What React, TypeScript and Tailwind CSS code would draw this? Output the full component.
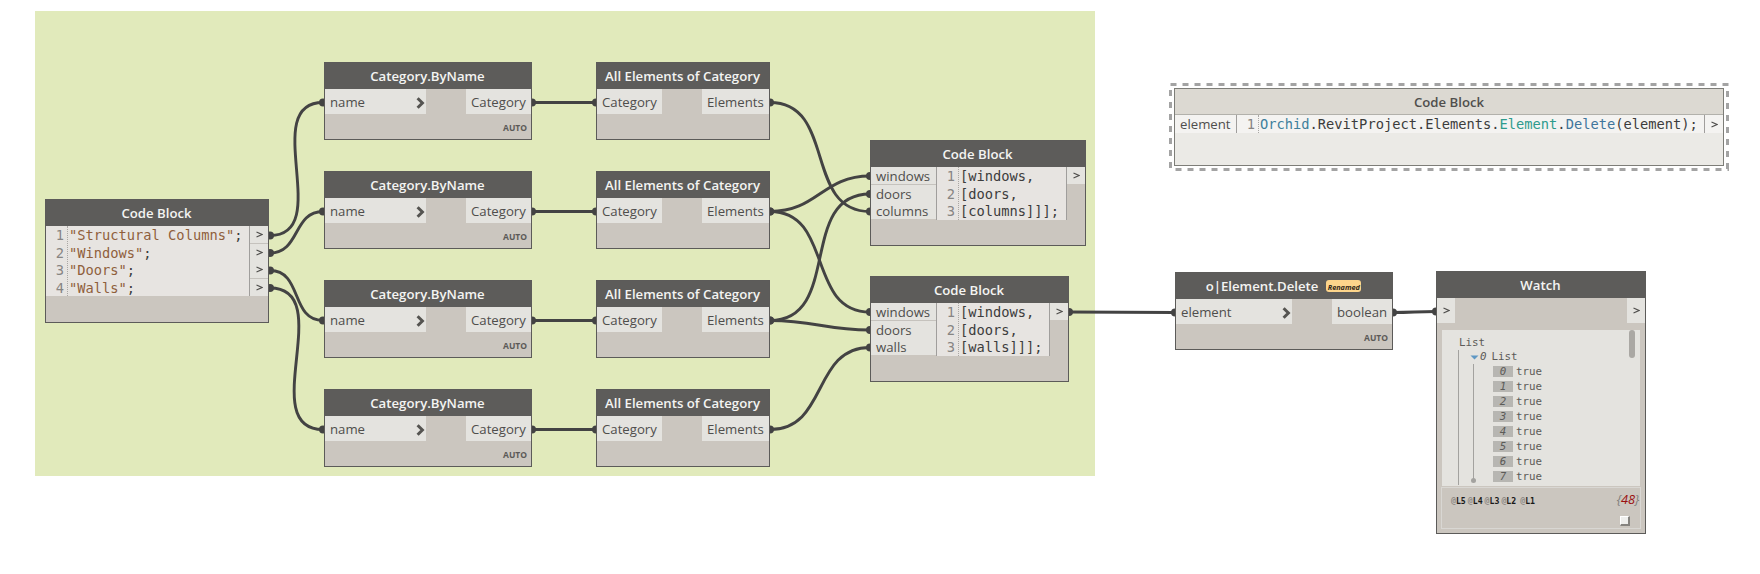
import React from "react";

type Point = [number, number];

const wires: [Point, Point][] = [
  [[270, 235.5], [323, 102.5]],
  [[270, 253], [323, 211.5]],
  [[270, 270.5], [323, 320.5]],
  [[270, 288], [323, 429.5]],
  [[532, 102.5], [596, 102.5]],
  [[532, 211.5], [596, 211.5]],
  [[532, 320.5], [596, 320.5]],
  [[532, 429.5], [596, 429.5]],
  [[770, 102.5], [870, 211.5]],
  [[770, 211.5], [870, 176]],
  [[770, 211.5], [870, 312]],
  [[770, 320.5], [870, 194]],
  [[770, 320.5], [870, 330]],
  [[770, 429.5], [870, 347.5]],
  [[1069, 312], [1175, 312.5]],
  [[1393, 312.5], [1436, 311.5]],
];

function wirePath([[x0, y0], [x1, y1]]: [Point, Point]) {
  const offset = 0.45 * Math.hypot(x1 - x0, y1 - y0);
  return `M${x0} ${y0}C${x0 + offset} ${y0} ${x1 - offset} ${y1} ${x1} ${y1}`;
}

function Wires() {
  return (
    <svg className="absolute inset-0" width="1760" height="574" fill="none">
      {wires.map((w, i) => (
        <g key={i}>
          <path d={wirePath(w)} stroke="#434343" strokeWidth="2.9" />
          <circle cx={w[0][0]} cy={w[0][1]} r="4" fill="#434343" />
          <circle cx={w[1][0]} cy={w[1][1]} r="4" fill="#434343" />
        </g>
      ))}
    </svg>
  );
}

function Node({ title, className, children, badge }: { title: string; className: string; children: React.ReactNode; badge?: React.ReactNode }) {
  return (
    <section className={`absolute flex flex-col border border-[#5c5b59] bg-[#cbc6bf] ${className}`}>
      <header className="flex h-[26px] shrink-0 items-center justify-center bg-[#5d5c5a] pt-px pr-px text-[13.2px] font-semibold whitespace-pre text-[#f4f4f2]">
        <span>{title}</span>
        {badge}
      </header>
      {children}
    </section>
  );
}

function Chevron() {
  return (
    <svg width="9" height="12" viewBox="0 0 9 12" fill="none">
      <path d="M1.6 1.2L6.4 6L1.6 10.8" stroke="#555451" strokeWidth="3" />
    </svg>
  );
}

function Port({ label, className, chevron }: { label: string; className: string; chevron?: boolean }) {
  return (
    <div className={`flex h-[25px] items-center justify-between bg-[#e4e3df] pt-[2px] pr-[5px] pl-[5px] ${className}`}>
      <span>{label}</span>
      {chevron && <span className="mr-[-4px]"><Chevron /></span>}
    </div>
  );
}

function FunctionNode(props: { title: string; className: string; input: string; inputClass: string; output: string; outputClass: string; chevron?: boolean; auto?: boolean; badge?: React.ReactNode }) {
  return (
    <Node title={props.title} className={`h-[78px] ${props.className}`} badge={props.badge}>
      <div className="flex justify-between text-[13.2px] text-[#4f4e4c]">
        <Port label={props.input} className={props.inputClass} chevron={props.chevron} />
        <Port label={props.output} className={props.outputClass} />
      </div>
      {props.auto && (
        <div className="flex h-[25px] items-center justify-end pt-[3px] pr-1 text-[8.5px] font-bold text-[#5c5a57]">AUTO</div>
      )}
    </Node>
  );
}

function Caret() {
  return (
    <svg width="7" height="7" viewBox="0 0 7 7" fill="none">
      <path d="M.5 1L6 3.5L.5 6" stroke="#4f4e4c" strokeWidth="1.1" />
    </svg>
  );
}

function LineNumbers({ count }: { count: number }) {
  return (
    <div className="w-[22px] border-r border-dotted border-[#aaa7a4] pr-[3px] text-right text-[#878583]">
      {Array.from({ length: count }, (_, i) => (
        <div key={i} className="h-[17.5px]">{i + 1}</div>
      ))}
    </div>
  );
}

const mono = "font-['DejaVu_Sans_Mono',monospace] text-[13.72px] leading-[18px] whitespace-pre";

function ListBlock({ className, names }: { className: string; names: string[] }) {
  return (
    <Node title="Code Block" className={`h-[106px] ${className}`}>
      <div className="flex h-[53px]">
        <div className="flex h-[52px] w-[65px] flex-col bg-[#e4e3df] text-[13.2px] leading-[18px] text-[#4f4e4c]">
          {names.map((n, i) => (
            <div key={n} className={i === 0 ? "h-[18px] border-b border-[#c5c2bd] pl-[5px]" : "h-[17px] pl-[5px]"}>{n}</div>
          ))}
        </div>
        <div className={`flex flex-1 border-x border-[#a09e9c] bg-[#e7e4e1] ${mono}`}>
          <LineNumbers count={3} />
          <div className="pl-px text-[#3c3c3c]">
            {names.map((n, i) => (
              <div key={n} className="h-[17.5px]">{`[${n}${i === 2 ? "]]];" : ","}`}</div>
            ))}
          </div>
        </div>
        <div className="flex h-[17px] w-[18px] items-center justify-center bg-[#e4e3df]"><Caret /></div>
      </div>
    </Node>
  );
}

function StringBlock() {
  const values = ["Structural Columns", "Windows", "Doors", "Walls"];
  return (
    <Node title="Code Block" className="top-[199px] left-[45px] h-[124px] w-[224px]">
      <div className="flex h-[70px] bg-[#e7e4e1]">
        <div className={`flex flex-1 border-r border-[#a09e9c] ${mono}`}>
          <LineNumbers count={4} />
          <div className="pl-px text-[#3c3c3c]">
            {values.map((v) => (
              <div key={v} className="h-[17.5px]">
                <span className="text-[#8f5f3c]">{`"${v}"`}</span>;
              </div>
            ))}
          </div>
        </div>
        <div className="flex w-[18px] flex-col bg-[#e4e3df]">
          {values.map((v, i) => (
            <div key={v} className={`flex h-[17.5px] items-center justify-center ${i % 2 === 0 ? "border-b border-[#c5c2bd]" : ""}`}><Caret /></div>
          ))}
        </div>
      </div>
    </Node>
  );
}

function FrozenBlock() {
  return (
    <>
      <svg className="absolute top-[80px] left-[1166px]" width="568" height="94" stroke="#a3a3a3" strokeWidth="3" strokeDasharray="6 6">
        <path d="M4.5 4.5H563" />
        <path d="M4.5 10V91" />
        <path d="M9.5 89.5H563" />
        <path d="M561.5 11V91" />
      </svg>
      <section className="absolute top-[88px] left-[1174px] flex h-[78px] w-[550px] flex-col border border-[#7d7d78] bg-[#ebeae6]">
        <header className="flex h-[26px] shrink-0 items-center justify-center border-b border-[#b2b1ab] bg-[#dcd9d2] pt-[2px] text-[13.2px] font-semibold text-[#504f4d]">Code Block</header>
        <div className="flex h-[18px] bg-[#f4f3f1]">
          <div className="w-[61px] pl-[5px] text-[13.2px] leading-[18px] text-[#4f4e4c]">element</div>
          <div className={`flex flex-1 border-x border-[#a09e9c] ${mono}`}>
            <LineNumbers count={1} />
            <div className="pl-px text-[#3c3c3c]">
              <span className="text-[#3f7f9c]">Orchid</span>.RevitProject.Elements.<span className="text-[#2e9b8d]">Element</span>.<span className="text-[#40759b]">Delete</span>(element);
            </div>
          </div>
          <div className="flex w-[18px] items-center justify-center"><Caret /></div>
        </div>
      </section>
    </>
  );
}

function WatchNode() {
  return (
    <Node title="Watch" className="top-[271px] left-[1436px] h-[263px] w-[210px]">
      <div className="flex h-[25px] justify-between">
        <div className="flex w-[18px] items-center justify-center bg-[#e4e3df]"><Caret /></div>
        <div className="flex w-[18px] items-center justify-center bg-[#e4e3df]"><Caret /></div>
      </div>
      <div className="mx-[5px] mt-[7px] flex h-[156px] justify-between bg-[#e4e3df] font-['DejaVu_Sans_Mono',monospace] text-[10.8px] text-[#5c5b58]">
        <div className="pt-[6px] pl-[16px]">
          <div className="h-[14px] leading-[14px]">
            <span className="pl-px">List</span>
          </div>
          <div className="h-[135px] border-l border-[#a3a29f] pl-[11px]">
            <div className="flex h-[14px] items-center leading-[14px]">
              <svg width="9" height="5" viewBox="0 0 9 5"><path d="M.5 .5H8.5L4.5 4.5Z" fill="#5f98c4" /></svg>
              <span className="pl-px italic">0</span>
              <span className="pl-[5px]">List</span>
            </div>
            <div className="relative ml-[3px] h-[118px] border-l border-[#a3a29f] pl-[19px]">
              {Array.from({ length: 8 }, (_, i) => (
                <div key={i} className="flex h-[15px] items-center">
                  <span className="h-[11px] w-[20px] bg-[#b7b6b2] text-center leading-[12px] italic">{i}</span>
                  <span className="pl-[3px] leading-[13px]">true</span>
                </div>
              ))}
              <span className="absolute -bottom-[1px] -left-[3px] size-[5px] rounded-full bg-[#a3a29f]" />
            </div>
          </div>
        </div>
        <div className="mr-[5px] h-[28px] w-[6px] rounded-full bg-[#aaa8a4]" />
      </div>
      <div className="mx-1 mt-px h-[42px] border border-[#d9d7d3]">
        <div className="flex h-[26px] items-center justify-between pr-px pl-[9px]">
          <div className="flex gap-[2px] font-['DejaVu_Sans_Mono',monospace] text-[8.2px] font-bold text-[#191919]">
            {["L5", "L4", "L3", "L2", "L1"].map((l) => (
              <span key={l} className={l === "L1" ? "ml-[2px]" : ""}><span className="text-[#8e8a86]">@</span>{l}</span>
            ))}
          </div>
          <div className="-mt-[2px] text-[12.8px] tracking-[-0.2px] text-[#82807c] italic">{"{"}<span className="text-[#9b1010]">48</span>{"}"}</div>
        </div>
        <div className="flex justify-end pt-[2px] pr-[10px]">
          <div className="size-[10px] border-t border-r-2 border-b-2 border-l border-t-white border-r-[#85837f] border-b-[#85837f] border-l-white bg-[#eeeeec]" />
        </div>
      </div>
    </Node>
  );
}

const categoryRows = ["top-[62px]", "top-[171px]", "top-[280px]", "top-[389px]"];

export default function App() {
  return (
    <main className="relative h-[574px] w-[1760px] overflow-hidden bg-white font-['Open_Sans',sans-serif]">
      <div className="absolute top-[11px] left-[35px] h-[465px] w-[1060px] bg-[#e1eabb]" />
      <Wires />
      <StringBlock />
      {categoryRows.map((top) => (
        <React.Fragment key={top}>
          <FunctionNode title="Category.ByName" className={`left-[324px] w-[208px] ${top}`} input="name" inputClass="w-[101px]" output="Category" outputClass="w-[65px]" chevron auto />
          <FunctionNode title="All Elements of Category" className={`left-[596px] w-[174px] ${top}`} input="Category" inputClass="w-[65px]" output="Elements" outputClass="w-[67px]" />
        </React.Fragment>
      ))}
      <ListBlock className="top-[140px] left-[870px] w-[216px]" names={["windows", "doors", "columns"]} />
      <ListBlock className="top-[276px] left-[870px] w-[199px]" names={["windows", "doors", "walls"]} />
      <FrozenBlock />
      <FunctionNode
        title="o|Element.Delete"
        className="top-[272px] left-[1175px] w-[218px]"
        input="element"
        inputClass="w-[116px]"
        output="boolean"
        outputClass="w-[60px]"
        chevron
        auto
        badge={<span className="-mt-px ml-2 flex h-3 w-[35px] items-center justify-center rounded-[3px] bg-[#fdd58b] pt-[2px] text-[7.3px] font-bold text-[#33291a] italic">Renamed</span>}
      />
      <WatchNode />
    </main>
  );
}
